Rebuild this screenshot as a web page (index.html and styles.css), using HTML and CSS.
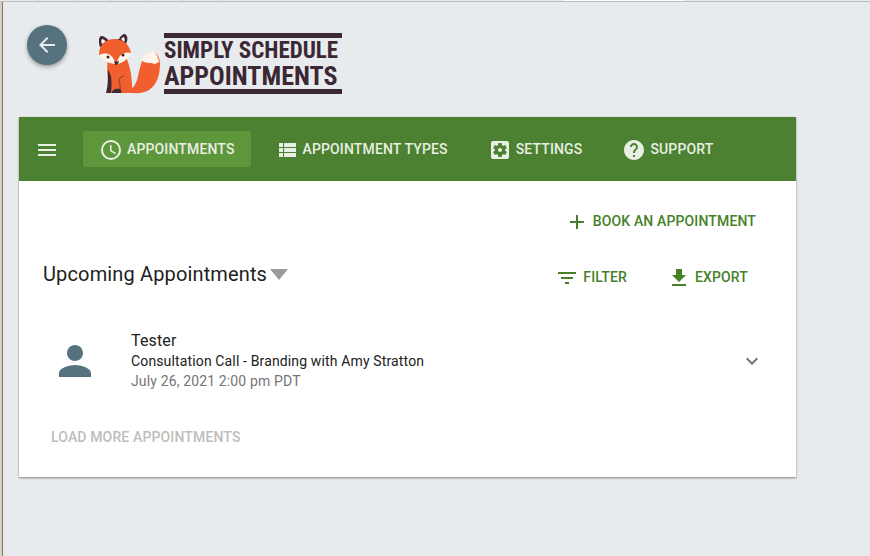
FILE: index.html
```
<!DOCTYPE html>
<html lang="en">
<head>
<meta charset="utf-8">
<meta name="viewport" content="width=device-width, initial-scale=1">
<title>Simply Schedule Appointments</title>
<link rel="stylesheet" href="styles.css">
</head>
<body>
<div class="tab-strip"></div>
<div class="frame">
<div class="side-strip"></div>
<div class="page">
  <header class="header">
    <button class="back" type="button" aria-label="Back">
      <svg class="icon" viewBox="0 0 24 24"><path d="M20 11H7.8l5.6-5.6L12 4l-8 8 8 8 1.4-1.4L7.800 13H20z"/></svg>
    </button>
    <div class="logo">
      <svg class="fox" viewBox="0 0 62 62" aria-hidden="true">
        <path fill="#f15f2e" d="M9 24C7 36 9 49 11 60h23c17 2 27-9 27-29 0-5-2-9-5-12-5 2-12 5-14 12-3 9-3 20-9 24 0-12-2-22-6-31z"/>
        <path fill="#fff4ea" d="M55 18c-6 2-11 5-13 9l3 2 4 1 3 0 4 1 4-2c-1-4-2-8-5-11z"/>
        <path fill="#3c2734" d="M9 37c4 5 4 14 3 23H7c2-7 2-14 2-23zM13 60c0-3 3-5 8-4 1 1 2 2 1 4z"/>
        <path fill="none" stroke="#3c2734" stroke-width=".6" d="M25 43c-5 1-6 4-4 8v6"/>
        <path fill="#3c2734" d="M1 14C-1 8 0 4 2 3c3 0 6 2 8 5l10-2c1-3 4-5 6-5 3 2 3 6 1 10z"/>
        <path fill="#fff4ea" d="M3 11c-1-2-1-4 0-5 1 0 3 1 4 3zM22 6c1-1 2-2 3-2 1 2 1 4 0 5z"/>
        <path fill="#f15f2e" d="M0 22C0 11 7 6 15 6c9 0 15 5 17 14L17 31z"/>
        <path fill="#fff4ea" d="M0 22c6-3 13-2 16 7h2c2-7 7-11 14-9-3 6-8 10-14 11H16C8 30 3 27 0 22z"/>
        <path fill="#3c2734" d="M15 28q2 1 5 0-1 4-3 4-1 0-2-4z"/>
        <circle cx="9" cy="24" r="1.500" fill="#3c2734"/><circle cx="24" cy="22" r="1.500" fill="#3c2734"/>
      </svg>
      <div class="wordmark"><span class="word-top">SIMPLY SCHEDULE</span><span class="word-bottom">APPOINTMENTS</span></div>
    </div>
  </header>
  <main class="card">
    <nav class="toolbar">
      <button class="menu" type="button" aria-label="Menu"><svg class="icon" viewBox="0 0 24 24"><path d="M3 18h18v-2H3v2zm0-5h18v-2H3v2zm0-7v2h18V6H3z"/></svg></button>
      <a class="tab active" href="#appointments"><svg class="icon" viewBox="0 0 24 24"><path d="M12 2a10 10 0 1 0 0 20 10 10 0 0 0 0-20zm0 18a8 8 0 1 1 0-16 8 8 0 0 1 0 16zm.5-13H11v6l5.200 3.200.8-1.300-4.500-2.700z"/></svg>APPOINTMENTS</a>
      <a class="tab" href="#types"><svg class="icon" viewBox="0 0 24 24"><path d="M4 14h4v-4H4v4zm0 5h4v-4H4v4zM4 9h4V5H4v4zm5 5h12v-4H9v4zm0 5h12v-4H9v4zM9 5v4h12V5H9z"/></svg>APPOINTMENT TYPES</a>
      <a class="tab" href="#settings"><svg class="icon" viewBox="0 0 24 24"><path d="M12 10c-1.100 0-2 .9-2 2s.9 2 2 2 2-.9 2-2-.9-2-2-2zm7-7H5c-1.110 0-2 .9-2 2v14c0 1.100.89 2 2 2h14c1.110 0 2-.9 2-2V5c0-1.100-.89-2-2-2zm-1.750 9c0 .23-.02.46-.05.68l1.480 1.160c.13.110.17.3.08.45l-1.400 2.420c-.09.15-.27.21-.43.15l-1.740-.7c-.36.28-.76.51-1.180.69l-.26 1.850c-.03.17-.18.3-.35.3h-2.800c-.17 0-.32-.13-.35-.29l-.26-1.850c-.43-.18-.82-.41-1.180-.69l-1.740.7c-.16.06-.34 0-.43-.15l-1.400-2.420c-.09-.15-.05-.34.08-.45l1.480-1.160c-.03-.23-.05-.46-.05-.69s.02-.46.05-.68l-1.480-1.160c-.13-.11-.17-.3-.08-.45l1.400-2.420c.09-.15.27-.21.43-.15l1.740.7c.36-.28.76-.51 1.180-.69l.26-1.850c.03-.17.18-.3.35-.3h2.800c.17 0 .32.13.35.29l.26 1.850c.43.18.82.41 1.180.69l1.740-.7c.16-.06.34 0 .43.15l1.400 2.420c.09.15.05.34-.08.45l-1.480 1.160c.03.23.05.46.05.69z"/></svg>SETTINGS</a>
      <a class="tab" href="#support"><svg class="icon" viewBox="0 0 24 24"><path d="M12 2C6.480 2 2 6.480 2 12s4.480 10 10 10 10-4.480 10-10S17.520 2 12 2zm1 17h-2v-2h2v2zm2.070-7.750l-.9.920C13.450 12.900 13 13.500 13 15h-2v-.5c0-1.100.45-2.100 1.170-2.830l1.240-1.260c.37-.36.59-.86.59-1.410 0-1.100-.9-2-2-2s-2 .9-2 2H8c0-2.210 1.790-4 4-4s4 1.790 4 4c0 .88-.36 1.680-.93 2.250z"/></svg>SUPPORT</a>
    </nav>
    <div class="content">
      <div class="book-row">
        <button class="action" type="button"><svg class="icon" viewBox="0 0 24 24"><path d="M19 13h-6v6h-2v-6H5v-2h6V5h2v6h6v2z"/></svg>BOOK AN APPOINTMENT</button>
      </div>
      <div class="heading-row">
        <h1 class="heading"><button class="heading-button" type="button">Upcoming Appointments<svg class="caret" viewBox="0 0 18 11"><path d="M0 0h18l-9 11z"/></svg></button></h1>
        <div class="tools">
          <button class="action" type="button"><svg class="icon" viewBox="0 0 24 24"><path d="M10 18h4v-2h-4v2zM3 6v2h18V6H3zm3 7h12v-2H6v2z"/></svg>FILTER</button>
          <button class="action" type="button"><svg class="icon" viewBox="0 0 24 24"><path d="M19 9h-4V3H9v6H5l7 7 7-7zM5 18v2h14v-2H5z"/></svg>EXPORT</button>
        </div>
      </div>
      <article class="item">
        <svg class="avatar" viewBox="0 0 24 24"><path d="M12 12c2.210 0 4-1.790 4-4s-1.790-4-4-4-4 1.790-4 4 1.790 4 4 4zm0 2c-2.670 0-8 1.340-8 4v2h16v-2c0-2.660-5.330-4-8-4z"/></svg>
        <div class="details">
          <h2 class="name">Tester</h2>
          <p class="service">Consultation Call - Branding with Amy Stratton</p>
          <p class="date">July 26, 2021 2:00 pm PDT</p>
        </div>
        <button class="expand" type="button" aria-label="Show details"><svg class="icon" viewBox="0 0 24 24"><path d="M16.590 8.590L12 13.170 7.410 8.590 6 10l6 6 6-6z"/></svg></button>
      </article>
      <button class="more" type="button" disabled>LOAD MORE APPOINTMENTS</button>
    </div>
  </main>
</div>
</div>
</body>
</html>
```
FILE: styles.css
```
* { box-sizing: border-box; }
body {
  margin: 0;
  min-height: 100vh;
  display: flex;
  flex-direction: column;
  background: #e7ebee;
  color: #212121;
  font: 400 14px/20px Roboto, sans-serif;
  letter-spacing: 0.01em;
}
h1, h2, p { margin: 0; font-weight: 400; }
button {
  border: 0;
  padding: 0;
  background: none;
  color: inherit;
  font: inherit;
  letter-spacing: inherit;
}
.icon { width: 24px; height: 24px; fill: currentColor; flex: none; display: block; }

.tab-strip {
  height: 2px;
  border-bottom: 1px solid #bcbcbc;
  background:
    linear-gradient(#fff, #fff) 564px 0 / 119px 100% no-repeat,
    repeating-linear-gradient(90deg, #ebebe5 0 35px, #c8c8c4 35px 36px) 3px 0 / 216px 100% no-repeat,
    #ebebe5;
}
.frame { flex: 1; display: flex; }
.side-strip { width: 3px; background: #d2d2ce; border-right: 1px solid #957239; }
.page {
  flex: 1;
  padding: 23px 74px 24px 16px;
  background: repeating-linear-gradient(#e7ebee 0 10px, #e9edef 10px 11px);
}

.header { display: flex; gap: 32px; padding-left: 8px; height: 92px; }
.back {
  display: flex;
  align-items: center;
  justify-content: center;
  width: 40px;
  height: 40px;
  border-radius: 50%;
  background: #56727f;
  color: #e8edef;
  box-shadow: 0 2px 4px rgba(0, 0, 0, 0.35);
}
.logo { display: flex; gap: 3px; padding-top: 8px; }
.fox { width: 62px; height: 62px; }
.wordmark {
  display: flex;
  flex-direction: column;
  justify-content: center;
  width: 178px;
  height: 61px;
  border: solid #3c2734;
  border-width: 5px 0;
  color: #3c2734;
  font-family: "Liberation Sans Narrow", "Roboto Condensed", "DejaVu Sans Condensed", sans-serif;
  font-weight: 700;
  letter-spacing: normal;
  white-space: nowrap;
}
.word-top { font-size: 23px; line-height: 24px; }
.word-bottom { font-size: 26px; line-height: 26px; }

.card {
  background: #fff;
  box-shadow: 0 1px 2px rgba(0, 0, 0, 0.45);
}
.toolbar {
  display: flex;
  align-items: center;
  gap: 8px;
  height: 64px;
  padding: 0 16px;
  background: #4b8130;
  color: #e8efe4;
}
.menu { margin-right: 16px; }
.menu .icon, .tab .icon, .action .icon { margin-top: 2px; }
.tab {
  display: flex;
  align-items: center;
  gap: 4px;
  height: 36px;
  padding: 0 16px;
  border-radius: 2px;
  color: inherit;
  font-weight: 500;
  text-decoration: none;
  white-space: nowrap;
}
.tab.active { background: #5e963b; }

.content { padding: 22px 24px; }
.book-row, .tools { display: flex; justify-content: flex-end; }
.book-row { padding-right: 8px; }
.tools { gap: 24px; padding-right: 16px; }
.action {
  display: flex;
  align-items: center;
  gap: 4px;
  height: 36px;
  padding: 0 8px;
  color: #468129;
  font-weight: 500;
}
.heading-row {
  display: flex;
  justify-content: space-between;
  align-items: center;
  margin-top: 20px;
}
.heading { font-size: 20px; line-height: 24px; padding-bottom: 6px; }
.heading-button { display: flex; align-items: center; gap: 3px; }
.caret { width: 18px; height: 11px; fill: #9b9b9b; }
.item {
  display: flex;
  align-items: center;
  gap: 32px;
  margin-top: 36px;
  padding: 0 8px;
}
.avatar { width: 48px; height: 48px; fill: #56727f; flex: none; }
.details { flex: 1; }
.name { font-size: 16px; line-height: 20px; }
.date { color: #757575; }
.expand { color: #757575; }
.more {
  display: block;
  height: 36px;
  margin-top: 28px;
  padding: 0 8px;
  color: #bdbdbd;
  font-weight: 500;
}
```
